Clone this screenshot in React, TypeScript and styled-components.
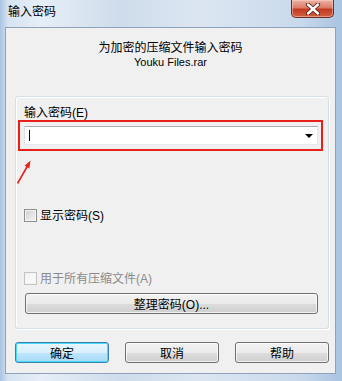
import React, { FC } from 'react';
import styled, { createGlobalStyle, css } from 'styled-components';

const GlobalStyle = createGlobalStyle`
  html, body {
    margin: 0;
    padding: 0;
    background: #ffffff;
  }
  body {
    font-family: "Liberation Sans", "Noto Sans CJK SC", sans-serif;
    font-size: 12px;
    color: #000000;
  }
`;

const font = `"Liberation Sans", "Noto Sans CJK SC", sans-serif`;

const App: FC = () => {
  return (
    <>
      <GlobalStyle />
      <Window>
        <TitleBar>
          <Title>输入密码</Title>
          <CloseButton aria-label="close">
            <svg width="16" height="12" viewBox="0 0 16 12">
              <path
                d="M3 1.5 L13 10.5 M13 1.5 L3 10.5"
                stroke="#5a1d14"
                strokeWidth="4.2"
                strokeLinecap="round"
              />
              <path
                d="M3 1.5 L13 10.5 M13 1.5 L3 10.5"
                stroke="#ffffff"
                strokeWidth="2.4"
                strokeLinecap="round"
              />
            </svg>
          </CloseButton>
        </TitleBar>

        <Client>
          <Header>
            <HeaderLine>为加密的压缩文件输入密码</HeaderLine>
            <HeaderLine $small>Youku Files.rar</HeaderLine>
          </Header>

          <GroupBox>
            <FieldLabel>输入密码(E)</FieldLabel>
            <Highlight>
              <Combo>
                <Caret />
                <DropArrow />
              </Combo>
            </Highlight>

            <Pointer width="20" height="30" viewBox="0 0 20 30">
              <path d="M1.5 26.5 L11.5 9" stroke="#e5231d" strokeWidth="1.6" fill="none" />
              <path d="M14.5 3.5 L8.6 8.8 L13.4 11.6 Z" fill="#e5231d" />
            </Pointer>

            <CheckRow $top={58}>
              <CheckBox />
              <CheckText>显示密码(S)</CheckText>
            </CheckRow>

            <CheckRow $top={50} $disabled>
              <CheckBox $disabled />
              <CheckText>用于所有压缩文件(A)</CheckText>
            </CheckRow>

            <WideButton>整理密码(O)...</WideButton>
          </GroupBox>

          <ButtonRow>
            <DialogButton $primary>确定</DialogButton>
            <DialogButton>取消</DialogButton>
            <DialogButton>帮助</DialogButton>
          </ButtonRow>
        </Client>
      </Window>
    </>
  );
};

export default App;

const Window = styled.div`
  position: relative;
  width: 342px;
  height: 381px;
  box-sizing: border-box;
  padding: 0 6px 7px 5px;
  display: flex;
  flex-direction: column;
  background: linear-gradient(
    to right,
    #a9c4e2 0px,
    #d6e3f1 8px,
    #e6eef7 40px,
    #cfdceb 120px,
    #dce6f2 200px,
    #c9d9ec 300px,
    #a8c3e1 342px
  );
`;

const TitleBar = styled.div`
  height: 27px;
  display: flex;
  justify-content: space-between;
  align-items: flex-start;
`;

const Title = styled.span`
  padding: 4px 0 0 3px;
  font-family: ${font};
  font-size: 12px;
  line-height: 16px;
  color: #000000;
`;

const CloseButton = styled.div`
  width: 43px;
  height: 18px;
  margin-right: 2px;
  box-sizing: border-box;
  display: flex;
  align-items: center;
  justify-content: center;
  border: 1px solid #6e2c22;
  border-top: none;
  border-radius: 0 0 5px 5px;
  background: linear-gradient(
    to bottom,
    #eeb3a4 0%,
    #db7d68 45%,
    #c23a22 55%,
    #d2603f 100%
  );
  box-shadow: inset 0 0 0 1px rgba(255, 220, 210, 0.45);
`;

const Client = styled.div`
  flex: 1;
  display: flex;
  flex-direction: column;
  background: #f0f0f0;
  border: 1px solid #8ea3bb;
`;

const Header = styled.div`
  padding-top: 13px;
  display: flex;
  flex-direction: column;
  align-items: center;
`;

const HeaderLine = styled.span<{ $small?: boolean }>`
  font-family: ${font};
  font-size: ${(p) => (p.$small ? '11px' : '12px')};
  line-height: 14px;
  height: 14px;
`;

const GroupBox = styled.div`
  position: relative;
  margin: 27px 6px 0 9px;
  padding: 0 0 14px 0;
  display: flex;
  flex-direction: column;
  border: 1px solid #d5dfe5;
  box-shadow: inset 1px 1px 0 #ffffff, 1px 1px 0 #ffffff;
  border-radius: 3px;
`;

const FieldLabel = styled.span`
  margin: 9px 0 0 8px;
  font-family: ${font};
  font-size: 12px;
  line-height: 14px;
`;

const Highlight = styled.div`
  margin-left: 2px;
  width: 305px;
  height: 31px;
  box-sizing: border-box;
  padding: 4px 3px 4px 4px;
  border: 2px solid #e8201c;
`;

const Combo = styled.div`
  position: relative;
  height: 100%;
  box-sizing: border-box;
  display: flex;
  align-items: center;
  justify-content: space-between;
  padding: 0 4px 0 4px;
  background: #ffffff;
  border: 1px solid #dbdfe6;
  border-top-color: #abadb3;
  border-bottom-color: #e3e9ef;
  border-right-color: #e3e9ef;
`;

const Caret = styled.span`
  width: 1px;
  height: 11px;
  background: #000000;
`;

const DropArrow = styled.span`
  width: 0;
  height: 0;
  border-left: 4px solid transparent;
  border-right: 4px solid transparent;
  border-top: 4px solid #000000;
`;

const Pointer = styled.svg`
  position: absolute;
  left: 0;
  top: 60px;
`;

const CheckRow = styled.div<{ $top: number; $disabled?: boolean }>`
  margin: ${(p) => p.$top}px 0 0 8px;
  height: 13px;
  display: flex;
  align-items: center;
  gap: 3px;
  color: ${(p) => (p.$disabled ? '#8a8a8a' : '#000000')};
`;

const CheckBox = styled.span<{ $disabled?: boolean }>`
  width: 13px;
  height: 13px;
  box-sizing: border-box;
  border: 1px solid ${(p) => (p.$disabled ? '#c4c4c4' : '#8e8f8f')};
  background: ${(p) =>
    p.$disabled
      ? 'linear-gradient(135deg, #f4f4f4, #fafafa)'
      : 'linear-gradient(135deg, #cfcfcf, #f6f6f6)'};
  box-shadow: inset 0 0 0 1px #f4f4f4;
`;

const CheckText = styled.span`
  font-family: ${font};
  font-size: 12px;
  line-height: 14px;
`;

const buttonBase = css`
  box-sizing: border-box;
  height: 21px;
  display: flex;
  align-items: center;
  justify-content: center;
  font-family: ${font};
  font-size: 12px;
  color: #000000;
  border: 1px solid #707070;
  border-radius: 3px;
  background: linear-gradient(
    to bottom,
    #f2f2f2 0%,
    #ebebeb 50%,
    #dddddd 51%,
    #cfcfcf 100%
  );
  box-shadow: inset 0 0 0 1px rgba(255, 255, 255, 0.7);
`;

const WideButton = styled.div`
  ${buttonBase};
  margin: 8px 0 0 9px;
  width: 293px;
`;

const ButtonRow = styled.div`
  margin: 13px 0 0 9px;
  display: flex;
  gap: 16px;
`;

const DialogButton = styled.div<{ $primary?: boolean }>`
  ${buttonBase};
  width: 94px;
  ${(p) =>
    p.$primary &&
    css`
      border-color: #3c7fb1;
      background: linear-gradient(
        to bottom,
        #eaf6fd 0%,
        #d9f0fc 50%,
        #bee6fd 51%,
        #a7d9f5 100%
      );
      box-shadow: inset 0 0 0 1px #48dbff;
    `}
`;
